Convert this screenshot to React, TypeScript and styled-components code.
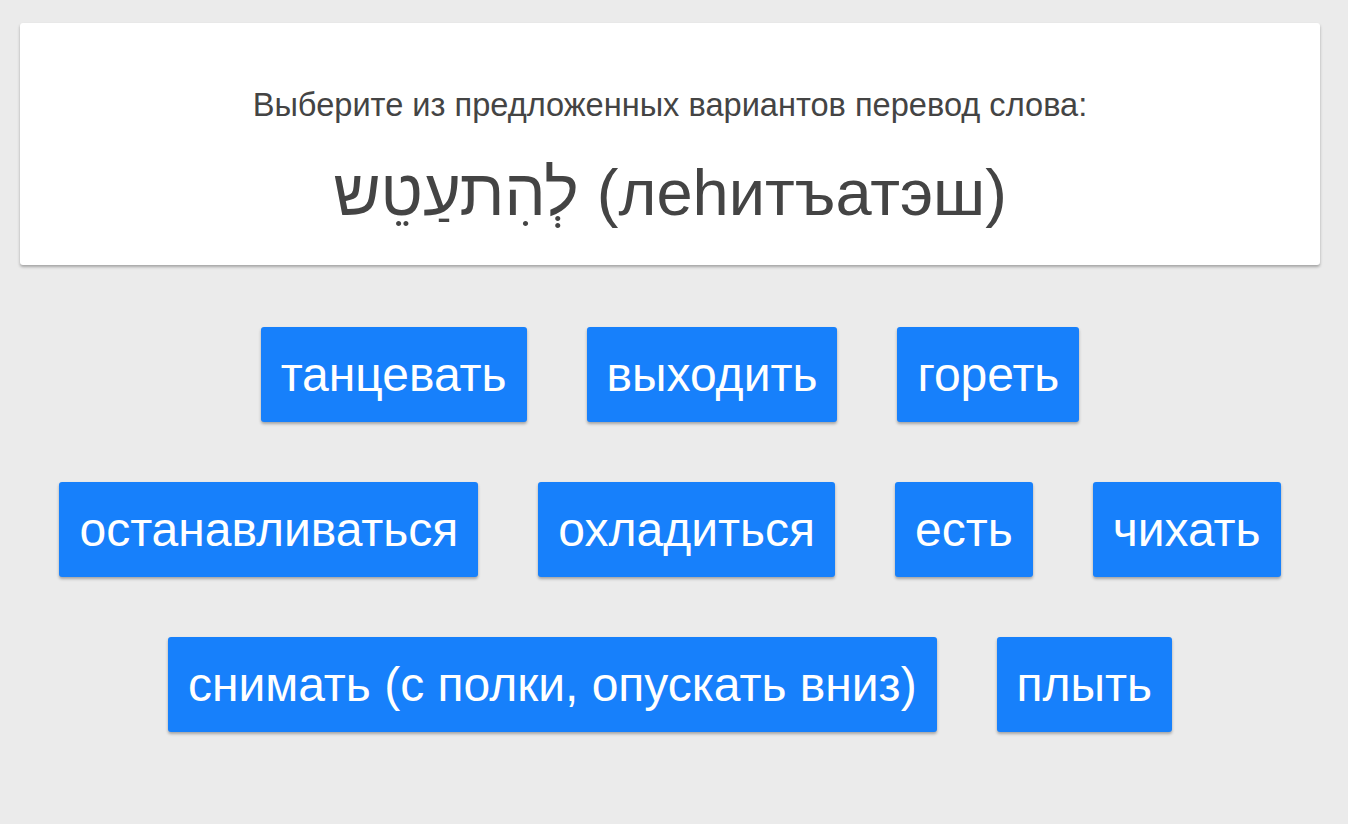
import React from 'react';
import styled, { createGlobalStyle } from 'styled-components';

const GlobalStyle = createGlobalStyle`
  html, body {
    margin: 0;
    padding: 0;
    background: #ebebeb;
    font-family: "Liberation Sans", Arial, sans-serif;
  }
`;

const Page = styled.div`
  padding: 23px 28px 40px 20px;
`;

const QuestionCard = styled.div`
  background: #fff;
  border-radius: 3px;
  box-shadow: 0 2px 3px rgba(0, 0, 0, 0.3);
  height: 242px;
  box-sizing: border-box;
  padding-top: 64px;
  text-align: center;
  color: #444;
`;

const Prompt = styled.div`
  font-size: 32.6px;
  line-height: 36px;
`;

const Word = styled.div`
  margin-top: 32px;
  font-size: 65px;
  line-height: 76px;
`;

const Options = styled.div`
  margin-top: 32px;
  display: flex;
  flex-wrap: wrap;
  justify-content: center;
`;

const Option = styled.button`
  margin: 30px;
  height: 95px;
  padding: 0 20px;
  border: none;
  border-radius: 3px;
  background: #1780fb;
  color: #fff;
  font-family: "Liberation Sans", Arial, sans-serif;
  font-size: 48px;
  box-shadow: 0 2px 3px rgba(0, 0, 0, 0.3);
  cursor: pointer;
`;

const options = [
  'танцевать',
  'выходить',
  'гореть',
  'останавливаться',
  'охладиться',
  'есть',
  'чихать',
  'снимать (с полки, опускать вниз)',
  'плыть',
];

export default function App() {
  return (
    <Page>
      <GlobalStyle />
      <QuestionCard>
        <Prompt>Выберите из предложенных вариантов перевод слова:</Prompt>
        <Word>
          <span dir="rtl">לְהִתעַטֵש</span> (леhитъатэш)
        </Word>
      </QuestionCard>
      <Options>
        {options.map((o) => (
          <Option key={o}>{o}</Option>
        ))}
      </Options>
    </Page>
  );
}
